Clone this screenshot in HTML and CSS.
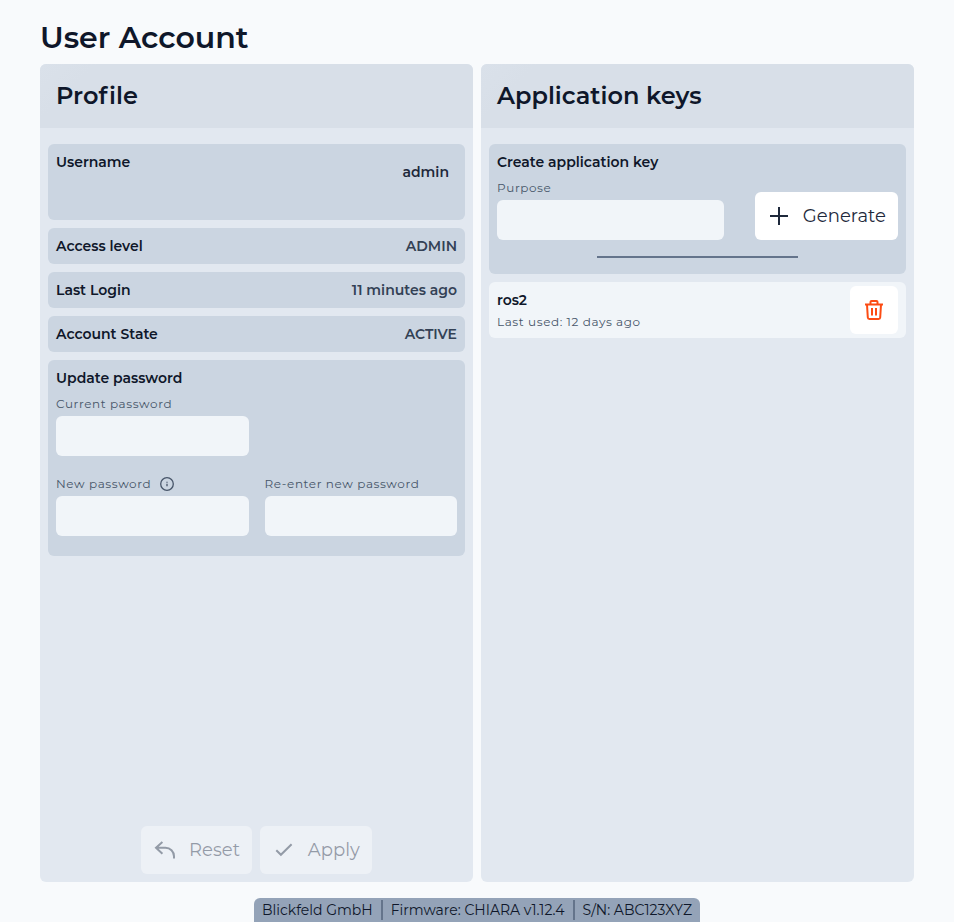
FILE: index.html
```html
<!DOCTYPE html>
<html lang="en">
<head>
<meta charset="utf-8">
<title>User Account</title>
<link rel="stylesheet" href="styles.css">
</head>
<body>
<main class="page">
  <h1 class="page-title">User Account</h1>
  <div class="panels">
    <section class="panel">
      <header class="panel-header"><h2>Pro<span class="loose">f</span>ile</h2></header>
      <div class="panel-body">
        <div class="card row username">
          <span class="card-title">Username</span>
          <span class="username-value">admin</span>
        </div>
        <div class="card row"><span class="card-title">Access level</span><span class="value">ADMIN</span></div>
        <div class="card row"><span class="card-title">Last Login</span><span class="value">11 minutes ago</span></div>
        <div class="card row"><span class="card-title">Account State</span><span class="value">ACTIVE</span></div>
        <form class="card password-card">
          <div class="card-title">Update password</div>
          <div class="password-grid">
            <div class="field first">
              <label class="label" for="current">Current password</label>
              <input class="input" id="current" type="password">
            </div>
            <div class="field">
              <label class="label" for="new">New password
                <svg class="info" viewBox="0 0 16 16"><circle cx="8" cy="8" r="6.3"/><path d="M8 7.8V10.2M8 5.8V6.8"/></svg>
              </label>
              <input class="input" id="new" type="password">
            </div>
            <div class="field">
              <label class="label" for="repeat">Re-enter new password</label>
              <input class="input" id="repeat" type="password">
            </div>
          </div>
        </form>
      </div>
      <footer class="panel-actions">
        <button class="button" disabled>
          <svg class="icon" viewBox="0 0 24 24"><path d="M9.4 4 3 9.8l6.4 5.9M3 9.8h9.5a8.5 8.5 0 0 1 8.5 8.5v2.2"/></svg>Reset
        </button>
        <button class="button" disabled>
          <svg class="icon" viewBox="0 0 24 24"><path d="M4.3 12.2 8.9 16.8 19.6 6.2"/></svg>Apply
        </button>
      </footer>
    </section>
    <section class="panel">
      <header class="panel-header"><h2>Application keys</h2></header>
      <div class="panel-body">
        <form class="card create-card">
          <div class="card-title">Create application key</div>
          <div class="create-row">
            <div class="field">
              <label class="label" for="purpose">Purpose</label>
              <input class="input" id="purpose">
            </div>
            <button class="button" type="button">
              <svg class="icon" viewBox="0 0 24 24"><path d="M12 3v18M3 12h18"/></svg>Generate
            </button>
          </div>
          <hr class="divider">
        </form>
        <div class="key">
          <div class="key-text">
            <span class="card-title">ros2</span>
            <span class="key-used">Last used: 12 days ago</span>
          </div>
          <button class="button delete" type="button" aria-label="Delete">
            <svg class="icon" viewBox="0 0 24 24"><path d="M3 6.5h18M8.5 6V4a1 1 0 0 1 1-1h5a1 1 0 0 1 1 1v2M5 6.5l.8 13a1.6 1.6 0 0 0 1.6 1.5h9.2a1.6 1.6 0 0 0 1.6-1.5l.8-13M10 10v7.6M14 10v7.6"/></svg>
          </button>
        </div>
      </div>
    </section>
  </div>
  <footer class="status-bar">
    <span>Blickfeld GmbH</span><i></i><span>Firmware: CHIARA v1.12.4</span><i></i><span>S/N: ABC123XYZ</span>
  </footer>
</main>
</body>
</html>
```
FILE: styles.css
```css
* { box-sizing: border-box; }

body {
  margin: 0;
  background: #f8fafc;
  color: #0f172a;
  font-family: Montserrat, Inter, "Liberation Sans", sans-serif;
  font-size: 14px;
  line-height: 20px;
}

h1, h2 { margin: 0; font-weight: 600; font-variant-ligatures: none; }

.page {
  height: 922px;
  padding: 16px 40px 0;
  display: flex;
  flex-direction: column;
}

.page-title {
  height: 48px;
  font-size: 30px;
  line-height: 44px;
}

.panels {
  height: 818px;
  display: grid;
  grid-template-columns: 1fr 1fr;
  gap: 8px;
}

.panel {
  display: flex;
  flex-direction: column;
  background: #e2e8f0;
  border-radius: 6px;
  overflow: hidden;
}

.panel-header {
  height: 64px;
  padding: 16px;
  background: linear-gradient(135deg, #dae1ea, #d8dfe8 40px);
}

.panel-header h2 { font-size: 24px; line-height: 32px; }

/* keeps the f clear of the dot on the i */
.loose { letter-spacing: 1.8px; }

.panel-body {
  flex: 1;
  padding: 16px 8px 0;
  display: flex;
  flex-direction: column;
  gap: 8px;
}

.card {
  background: #cbd5e1;
  border-radius: 6px;
  padding: 8px;
}

.card-title { font-weight: 600; }

.row { display: flex; justify-content: space-between; }
.value { font-weight: 600; color: #334155; }
.username { height: 76px; }
.username-value {
  height: 40px;
  padding: 0 8px;
  line-height: 40px;
  font-weight: 600;
  color: #1e293b;
}

.password-card { padding-bottom: 0; }

.password-grid {
  margin-top: 8px;
  display: grid;
  grid-template-columns: 1fr 1fr;
  column-gap: 16px;
}

.first { grid-column: 1 / 3; width: calc(50% - 8px); }

.field {
  display: flex;
  flex-direction: column;
  gap: 4px;
  padding-bottom: 20px;
}

.label {
  height: 16px;
  display: flex;
  align-items: center;
  gap: 8px;
  color: #475569;
  font-size: 12px;
  line-height: 16px;
  letter-spacing: 0.6px;
}

.info {
  width: 16px;
  height: 16px;
  fill: none;
  stroke: #475569;
  stroke-width: 1.3;
}

.input {
  width: 100%;
  height: 40px;
  border: 0;
  border-radius: 6px;
  background: #f1f5f9;
}

.create-card { height: 130px; }

.create-row {
  margin-top: 8px;
  height: 60px;
  display: flex;
  justify-content: space-between;
  align-items: flex-end;
}

.create-row .field { width: 227px; padding: 0; }

.divider {
  width: 201px;
  height: 2px;
  margin: 16px auto 0;
  border: 0;
  background: #64748b;
}

.button {
  height: 48px;
  padding: 0 12px;
  display: flex;
  align-items: center;
  gap: 11.7px;
  border: 0;
  border-radius: 6px;
  background: #fff;
  color: #1e293b;
  font: 400 18px/28px Montserrat, Inter, "Liberation Sans", sans-serif;
  letter-spacing: 0.05px;
}

.button:disabled { opacity: 0.4; }

.icon {
  width: 24px;
  height: 24px;
  fill: none;
  stroke: currentColor;
  stroke-width: 2;
}

.key {
  height: 56px;
  padding: 4px 8px;
  display: flex;
  justify-content: space-between;
  background: #f1f5f9;
  border-radius: 6px;
}

.key-text {
  padding-top: 4px;
  display: flex;
  flex-direction: column;
  gap: 4px;
}

.key-used {
  color: #475569;
  font-size: 12px;
  line-height: 16px;
  letter-spacing: 0.6px;
}

.delete { color: #fc4c14; }

.panel-actions {
  padding-bottom: 8px;
  display: flex;
  justify-content: center;
  gap: 8px;
}

.status-bar {
  height: 24px;
  margin: 16px auto 0;
  padding: 2px 8px;
  display: flex;
  gap: 8px;
  background: #94a3b8;
  border-radius: 6px 6px 0 0;
  color: #0f172a;
}

.status-bar i { width: 2px; background: #64748b; }
```
